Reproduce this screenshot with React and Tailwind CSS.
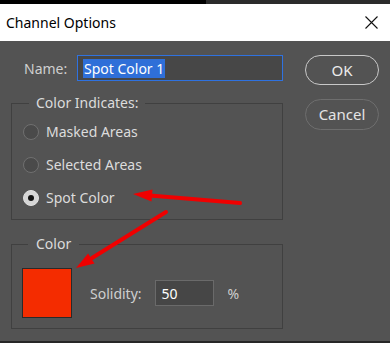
import React from 'react';

const font = { fontFamily: '"Noto Sans", "Open Sans", sans-serif' };

const Radio = ({ label, checked }) => (
  <div className="flex items-center h-[33px]">
    <div
      className={`w-[16px] h-[16px] rounded-full border flex items-center justify-center ${
        checked ? 'bg-[#d6d6d6] border-[#e0e0e0]' : 'bg-[#4a4a4a] border-[#707070]'
      }`}
    >
      {checked && <div className="w-[6px] h-[6px] rounded-full bg-[#111]" />}
    </div>
    <span className="ml-[7px] text-[14px] text-[#dcdcdc]">{label}</span>
  </div>
);

const Arrows = () => (
  <svg className="absolute inset-0 pointer-events-none" width="390" height="343">
    <line x1="240" y1="203" x2="150" y2="195.5" stroke="#f00000" strokeWidth="4" strokeLinecap="round" />
    <polygon points="133,194 152.5,189.6 151.5,201.6" fill="#f00000" />
    <line x1="166" y1="212" x2="92" y2="258" stroke="#f00000" strokeWidth="4" strokeLinecap="round" />
    <polygon points="76,268 94.5,263.6 88.1,253.4" fill="#f00000" />
  </svg>
);

export default function App() {
  return (
    <div className="relative w-[390px] h-[343px] flex flex-col overflow-hidden" style={font}>
      {/* window strip */}
      <div className="flex h-[4px]">
        <div className="w-[206px] bg-black" />
        <div className="flex-1 bg-[#2b2b2b]" />
      </div>

      {/* Title bar */}
      <div className="h-[37px] bg-white flex items-center justify-between pl-[6px] pr-[12px]">
        <span className="text-[14px] text-black">Channel Options</span>
        <svg width="13" height="13" viewBox="0 0 13 13">
          <path d="M0.5 0.5 L12.5 12.5 M12.5 0.5 L0.5 12.5" stroke="#111" strokeWidth="1.1" />
        </svg>
      </div>

      {/* Body */}
      <div className="flex-1 bg-[#535353] border-b-2 border-[#262626] flex pl-[11px] pt-[14px]">
        <div className="w-[272px] flex flex-col">
          {/* Name */}
          <div className="flex items-center h-[26px]">
            <span className="ml-[13px] w-[53px] text-[14px] text-[#cfcfcf]">Name:</span>
            <div className="w-[206px] h-[26px] border border-[#2f72e0] bg-[#474747] flex items-center px-[5px]">
              <span className="bg-[#2f6fd8] text-white text-[14px] leading-[19px] px-[1px]">Spot Color 1</span>
            </div>
          </div>

          {/* Color Indicates */}
          <fieldset className="mt-[12px] border border-[#404040] pl-[11px] pb-[5px] pt-[2px]">
            <legend className="ml-[6px] px-[7px] text-[14px] leading-[20px] text-[#dcdcdc]">Color Indicates:</legend>
            <Radio label="Masked Areas" />
            <Radio label="Selected Areas" />
            <Radio label="Spot Color" checked />
          </fieldset>

          {/* Color */}
          <fieldset className="mt-[14px] border border-[#404040] pl-[10px] pt-[14px] pb-[10px]">
            <legend className="ml-[6px] px-[8px] text-[14px] leading-[20px] text-[#dcdcdc]">Color</legend>
            <div className="flex items-center">
              <div className="w-[50px] h-[50px] bg-[#f42c00] border border-[#2a2a2a]" />
              <span className="ml-[18px] text-[14px] text-[#cfcfcf]">Solidity:</span>
              <div className="ml-[13px] w-[59px] h-[26px] bg-[#464646] border border-[#6a6a6a] flex items-center pl-[6px] text-[14px] text-white">
                50
              </div>
              <span className="ml-[14px] text-[14px] text-[#cfcfcf]">%</span>
            </div>
          </fieldset>
        </div>

        {/* Buttons */}
        <div className="ml-[22px] flex flex-col gap-[14px]">
          <button className="w-[74px] h-[30px] rounded-full border-[1.5px] border-[#c8c8c8] text-[15px] text-[#ececec] flex items-center justify-center">
            OK
          </button>
          <button className="w-[74px] h-[31px] rounded-full border-[1.5px] border-[#6e6e6e] text-[15px] text-[#e4e4e4] flex items-center justify-center">
            Cancel
          </button>
        </div>
      </div>

      <Arrows />
    </div>
  );
}
